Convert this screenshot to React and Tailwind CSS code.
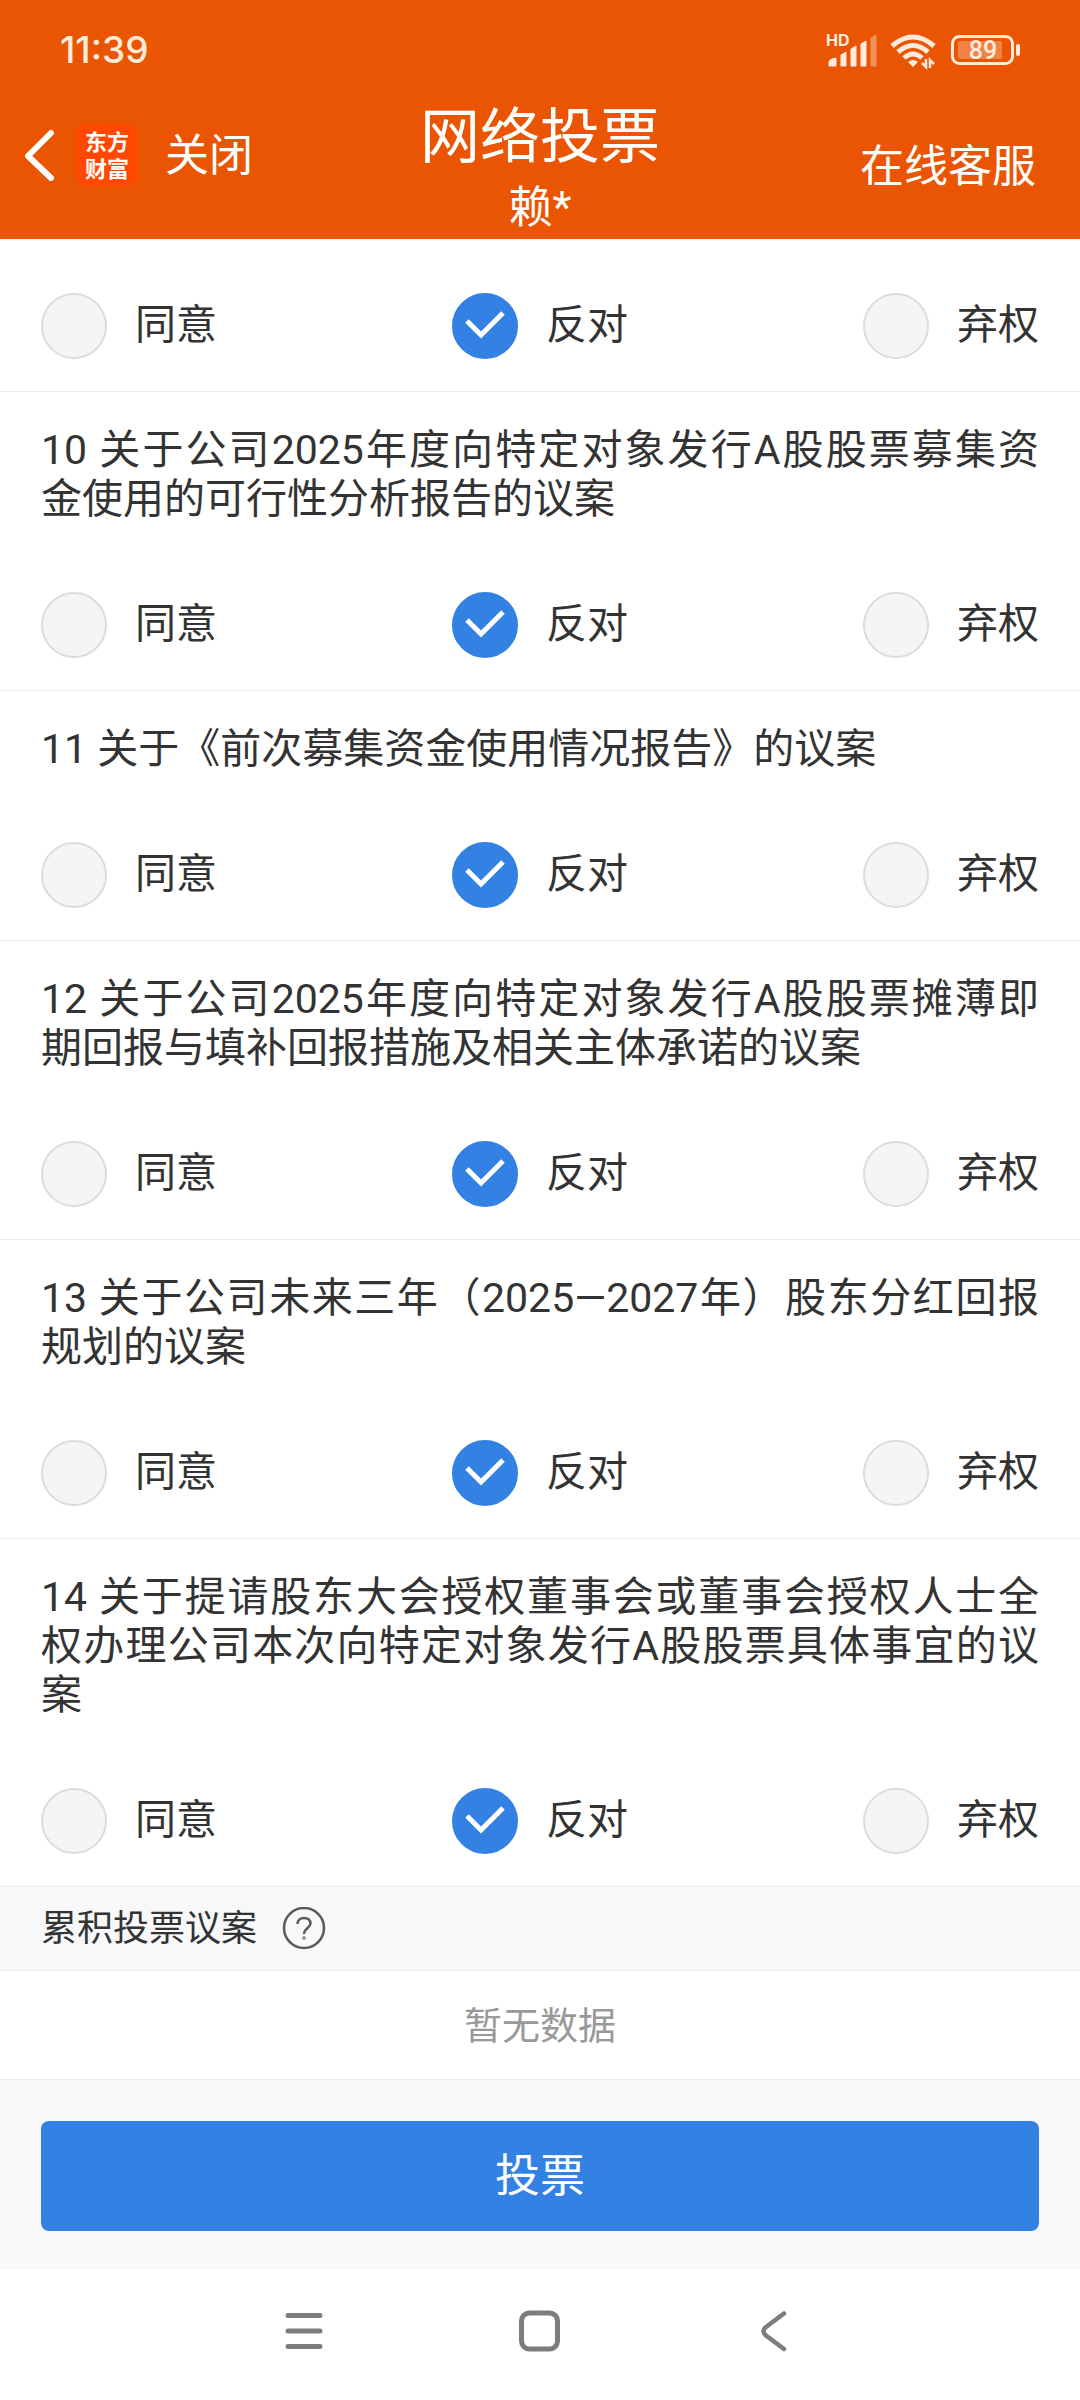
import { useState } from 'react';

const OPTIONS = [
  { key: 'agree', name: '同意' },
  { key: 'against', name: '反对' },
  { key: 'abstain', name: '弃权' },
];

const PROPOSALS = [
  { id: 9, lines: [] },
  { id: 10, lines: ['10 关于公司2025年度向特定对象发行A股股票募集资', '金使用的可行性分析报告的议案'] },
  { id: 11, lines: ['11 关于《前次募集资金使用情况报告》的议案'] },
  { id: 12, lines: ['12 关于公司2025年度向特定对象发行A股股票摊薄即', '期回报与填补回报措施及相关主体承诺的议案'] },
  { id: 13, lines: ['13 关于公司未来三年（2025—2027年）股东分红回报', '规划的议案'] },
  { id: 14, lines: ['14 关于提请股东大会授权董事会或董事会授权人士全', '权办理公司本次向特定对象发行A股股票具体事宜的议', '案'] },
];

function StatusBar() {
  return (
    <div className="flex h-[98px] items-start justify-between pt-[30px] pr-[59px] pl-[60px] text-[#ffeadb]">
      <span className="font-['Inter',sans-serif] text-[37px] leading-[40px] font-medium">11:39</span>
      <svg width="196" height="40" viewBox="0 0 196 40" fill="none" aria-hidden="true">
        <text x="1" y="16" fontSize="16" fontWeight="700" fontFamily="Inter, sans-serif" fill="currentColor">HD</text>
        <path d="M4 36V32Q4 29 11 28V36ZM16 36V25L21 22V36ZM26 36V19L31 16V36ZM36 36V14L41 11V36Z" fill="currentColor" stroke="currentColor" strokeLinejoin="round" />
        <path d="M46 36V8L51 5V36Z" fill="currentColor" stroke="currentColor" strokeLinejoin="round" opacity="0.4" />
        {/* wifi */}
        <path d="M67 16Q88 -2 109 16M73 22Q88 9 103 22M79 28Q88 20 97 28" stroke="currentColor" strokeWidth="5" />
        <path d="M83 32Q88 28 93 32L88 37Z" fill="currentColor" />
        <path d="M101 29V37L97 33M105 38V30L109 34" stroke="currentColor" strokeWidth="2.5" />
        {/* 电池 */}
        <rect x="127.5" y="6.5" width="60" height="27" rx="7" stroke="currentColor" strokeWidth="3" />
        <rect x="133" y="11" width="44" height="18" rx="2" fill="currentColor" opacity="0.3" />
        <path d="M193 16V24" stroke="currentColor" strokeWidth="4" strokeLinecap="round" />
        <text x="158" y="29" textAnchor="middle" fontSize="25" fontWeight="500" fontFamily="Roboto, sans-serif" fill="currentColor">89</text>
      </svg>
    </div>
  );
}

function Header() {
  return (
    <header className="bg-[#ea5504] text-white">
      <StatusBar />
      <div className="grid grid-cols-[1fr_auto_1fr] items-start">
        <div className="flex items-center pt-[26px] pl-6">
          <button type="button" aria-label="返回">
            <svg width="32" height="52" viewBox="0 0 32 52" fill="none">
              <path d="M27 4L4 27L27 49" stroke="white" strokeWidth="6" strokeLinecap="round" strokeLinejoin="round" />
            </svg>
          </button>
          <div className="ml-5 flex h-[62px] w-[62px] flex-col items-center justify-center rounded-xl bg-[#ff4800] pt-[2px] text-[22px] leading-[27px] font-bold">
            <span>东方</span>
            <span>财富</span>
          </div>
          <button type="button" className="ml-[27px] pt-[2px] text-[44px] leading-[60px]">关闭</button>
        </div>
        <div className="text-center">
          <h1 className="pt-1 text-[60px] leading-[72px]">网络投票</h1>
          <p className="pt-1 text-[44px] leading-[61px]">赖*</p>
        </div>
        <a href="#service" className="justify-self-end pt-[39px] pr-11 text-[44px] leading-[60px]">在线客服</a>
      </div>
    </header>
  );
}

function VoteRadio({ group, option, checked, onChange }) {
  return (
    <label className="flex items-center">
      <span className="grid">
        <input
          type="radio"
          name={group}
          value={option.key}
          checked={checked}
          onChange={onChange}
          className="col-start-1 row-start-1 h-[66px] w-[66px] appearance-none rounded-full border-2 border-[#dcdcdc] bg-[#f5f5f5] checked:border-[#3381e3] checked:bg-[#3381e3]"
        />
        {checked && (
          <svg className="pointer-events-none col-start-1 row-start-1" width="66" height="66" viewBox="0 0 66 66" fill="none">
            <path d="M15 28L29 42L51 20" stroke="white" strokeWidth="5" />
          </svg>
        )}
      </span>
      <span className="ml-7 pb-[2px] text-[41px] leading-[49px]">{option.name}</span>
    </label>
  );
}

function Proposal({ proposal }) {
  const [vote, setVote] = useState('against');
  const { id, lines } = proposal;

  return (
    <section className="border-b border-[#ebebeb] px-[41px] pb-8">
      {lines.length > 0 && (
        <h2 className="pt-[34px] pb-[14px] text-[41px] leading-[49px]">
          {lines.map((line, i) => (
            <span
              key={line}
              className={`block whitespace-nowrap ${i < lines.length - 1 ? '[text-align-last:justify]' : ''}`}
            >
              {line}
            </span>
          ))}
        </h2>
      )}
      <div role="radiogroup" aria-label={`议案${id}`} className="flex justify-between pt-[54px]">
        {OPTIONS.map((option) => (
          <VoteRadio
            key={option.key}
            group={`proposal-${id}`}
            option={option}
            checked={vote === option.key}
            onChange={() => setVote(option.key)}
          />
        ))}
      </div>
    </section>
  );
}

function NavBar() {
  return (
    <nav className="flex h-[130px] items-start justify-center gap-[194px] pt-10 text-[#7d7d7d]">
      <button type="button" aria-label="最近任务">
        <svg width="42" height="42" viewBox="0 0 42 42" fill="none" stroke="currentColor" strokeWidth="5" strokeLinecap="round">
          <path d="M5 5.5H37M5 21H37M5 36.5H37" />
        </svg>
      </button>
      <button type="button" aria-label="主屏幕">
        <svg width="42" height="42" viewBox="0 0 42 42" fill="none" stroke="currentColor" strokeWidth="5">
          <rect x="2.5" y="3" width="36" height="36" rx="8" />
        </svg>
      </button>
      <button type="button" aria-label="后退">
        <svg width="42" height="42" viewBox="0 0 42 42" fill="none" stroke="currentColor" strokeWidth="4.5" strokeLinecap="round">
          <path d="M29 3.5L11 17Q6 21 11 25.5L29 39" />
        </svg>
      </button>
    </nav>
  );
}

export default function App() {
  return (
    <div lang="zh-CN" className="min-h-screen bg-white font-['Roboto','Noto_Sans_CJK_SC',sans-serif] text-[#333333]">
      <Header />
      <main>
        {PROPOSALS.map((proposal) => (
          <Proposal key={proposal.id} proposal={proposal} />
        ))}

        {/* 累积投票 */}
        <div className="flex h-[84px] items-center border-b border-[#ebebeb] bg-[#f6f8fa] px-[41px]">
          <h2 className="text-[36px] leading-[44px]">累积投票议案</h2>
          <button type="button" aria-label="累积投票说明" className="ml-[25px]">
            <svg width="44" height="44" viewBox="0 0 44 44" fill="none" stroke="#5a5a5c" strokeWidth="2.5">
              <circle cx="22" cy="21" r="20" />
              <path d="M15.5 17C15.5 9 28.5 9 28.5 16.5C28.5 21 22 21 22 27" />
              <circle cx="22" cy="31" r="0.5" />
            </svg>
          </button>
        </div>
        <p className="border-b border-[#ebebeb] pt-[31px] pb-[29px] text-center text-[38px] leading-[48px] text-[#999999]">暂无数据</p>
        <div className="h-[41px] bg-[#f6f8fa]" />
        <div className="bg-[#f9f9f9] px-[41px] pb-[39px]">
          <button type="button" className="h-[110px] w-full rounded-lg bg-[#3381e3] pt-[2px] text-[45px] text-white">投票</button>
        </div>
      </main>
      <NavBar />
    </div>
  );
}
